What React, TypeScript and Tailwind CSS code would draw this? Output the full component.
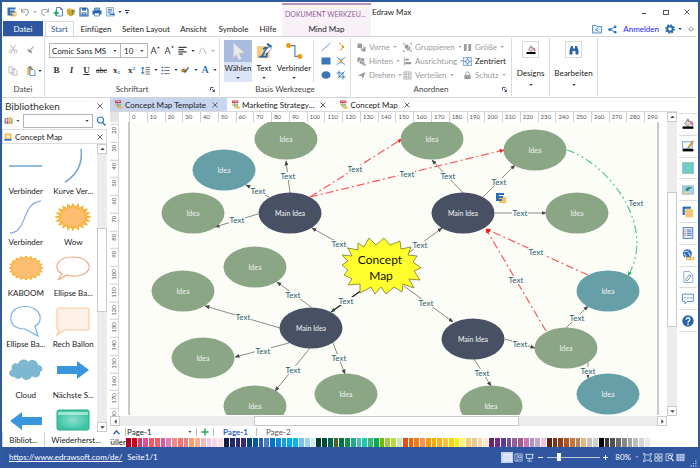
import React from "react";
import clsx from "clsx";

type IconProps = { className?: string; box?: string; children: React.ReactNode };

const Icon: React.FC<IconProps> = ({ className, box = "0 0 20 20", children }) => (
  <svg
    viewBox={box}
    fill="none"
    aria-hidden="true"
    className={clsx("shrink-0", className ?? "size-[10px]")}
  >
    {children}
  </svg>
);

const Caret: React.FC<{ className?: string }> = ({ className }) => (
  <svg
    viewBox="0 0 8 5"
    aria-hidden="true"
    className={clsx("h-[2px] w-[4px] shrink-0 fill-current", className ?? "text-[#1f3864]")}
  >
    <path d="M0 0h8L4 5z" />
  </svg>
);

const CloseIcon = () => (
  <Icon className="size-[6px]" box="0 0 12 12">
    <path d="M1 1l10 10M11 1L1 11" stroke="#555" strokeWidth="1.8" />
  </Icon>
);

const LogoIcon: React.FC<{ className?: string }> = ({ className }) => (
  <Icon className={className}>
    <path d="M7 8h12v11H7z" fill="#f6c15b" />
    <path d="M1 1h16v4H6v2h9v4H6v2h7v4H1z" fill="#2f6fb5" />
    <path d="M10 13h7v2h-7z" fill="#fff" />
  </Icon>
);

const UndoIcon: React.FC<{ flip?: boolean }> = ({ flip }) => (
  <Icon className={clsx("size-[10px]", flip && "-scale-x-100")}>
    <path d="M3 3v7h7M3 9c4-6 13-6 14 1 0 4-3 6-6 8" stroke="#a5a5a5" strokeWidth="2.2" />
  </Icon>
);

const ColorPot = () => (
  <>
    <path d="M4 9l6-6 6 5-6 6z" fill="#d5d5d5" stroke="#777" strokeWidth="1.2" />
    <path d="M8 6V3c0-2 3-2 3 0v4" stroke="#777" strokeWidth="1.2" />
    <path d="M13 5c4-1 6 2 6 7-2 2-4 0-3-3z" fill="#e8528a" />
    <path d="M1 14h18v4H1z" fill="#000" />
  </>
);

const DocIcon = () => (
  <Icon className="size-[9px]">
    <path d="M2 1h14v6H2z" fill="#c8454a" />
    <path d="M4 3h10v1H4z" fill="#fff" />
    <path d="M8 7v9h3M8 11h4" stroke="#4a90c8" strokeWidth="1.6" />
    <path d="M10 9h6v4h-6z" fill="#8fc36b" />
    <path d="M11 14h8v5h-8z" fill="#f2b632" />
    <path d="M3 9h4v4H3z" fill="#f2b632" />
  </Icon>
);

const quickAccess: { label: string; icon: React.ReactNode }[] = [
  {
    label: "Neu",
    icon: (
      <Icon>
        <path d="M7 1h8l4 4v13H7z" fill="#fff" stroke="#2f6fb5" strokeWidth="1.6" />
        <path d="M15 1v4h4" stroke="#2f6fb5" strokeWidth="1.4" />
        <path d="M6 7v11M1 12h11" stroke="#22a565" strokeWidth="3" />
      </Icon>
    ),
  },
  {
    label: "Öffnen",
    icon: (
      <Icon>
        <path d="M2 4l7-2 3 3 7 0-2 10-7 4-7-5z" fill="#f2b440" />
        <path d="M9 9l4-4 5 5h-3c0 4-2 6-5 7 1-3 2-5 1-8z" fill="#3f9a5e" />
        <path d="M2 4l6 4 2 11-7-5z" fill="#e09a26" />
      </Icon>
    ),
  },
  {
    label: "Speichern",
    icon: (
      <Icon>
        <path d="M2 2h13l3 3v13H2z" stroke="#2867ad" strokeWidth="2.4" />
        <path d="M6 2h8v5H6zM5 11h10v7H5z" fill="#2867ad" />
        <path d="M7 13h6M7 16h6" stroke="#fff" strokeWidth="1" />
      </Icon>
    ),
  },
  {
    label: "Drucken",
    icon: (
      <Icon>
        <path d="M5 2h10v5H5z" fill="#8db3dc" stroke="#2867ad" strokeWidth="1.4" />
        <path d="M1 7h18v8H1z" fill="#2867ad" />
        <path d="M5 12h10v6H5z" fill="#fff" stroke="#2867ad" strokeWidth="1.4" />
      </Icon>
    ),
  },
  {
    label: "Senden",
    icon: (
      <Icon>
        <path d="M3 1h14v17H3z" fill="#dce8f5" stroke="#6d9bcc" strokeWidth="1.4" />
        <path d="M6 5h8M6 8h8M6 11h5" stroke="#3d78b8" strokeWidth="1.6" />
        <path d="M9 13h8v-3l3 5-3 4v-3H9z" fill="#3d78b8" />
      </Icon>
    ),
  },
];

const menuTabs = [
  { label: "Start", className: "w-[29px] border border-b-0 border-[#d9d9d9] bg-white text-[#2f56a0]" },
  { label: "Einfügen", className: "w-[44px]" },
  { label: "Seiten Layout", className: "w-[56px]" },
  { label: "Ansicht", className: "w-[39px]" },
  { label: "Symbole", className: "w-[41px]" },
  { label: "Hilfe", className: "w-[28px]" },
];

const Header = () => (
  <header className="flex h-[34px] shrink-0 bg-white">
    <div className="flex w-[280px] flex-col">
      <div className="flex h-[19px] items-center gap-[3px] pl-[5px]">
        <LogoIcon className="size-[10px]" />
        <button aria-label="Rückgängig" className="flex items-center gap-[3px]">
          <UndoIcon />
          <Caret className="text-gray-400" />
        </button>
        <button aria-label="Wiederholen">
          <UndoIcon flip />
        </button>
        {quickAccess.map((item) => (
          <button key={item.label} aria-label={item.label}>
            {item.icon}
          </button>
        ))}
        <Caret />
        <button aria-label="Anpassen" className="flex flex-col items-center gap-px">
          <span className="h-px w-[4px] bg-[#1f3864]" />
          <Caret />
        </button>
      </div>
      <nav className="flex flex-1 items-stretch">
        <button className="mr-[2px] ml-px w-[40px] bg-[#2f56a0] text-white">Datei</button>
        {menuTabs.map((tab) => (
          <button key={tab.label} className={clsx("whitespace-nowrap", tab.className)}>
            {tab.label}
          </button>
        ))}
      </nav>
    </div>
    <div className="mt-px flex w-[89px] flex-col border-t-2 border-[#b98fbd] bg-[#f8f1f8]">
      <div className="flex h-[17px] items-center pl-[3px] text-[7px] whitespace-nowrap text-[#93609b]">
        DOKUMENT WERKZEU...
      </div>
      <button className="flex-1">Mind Map</button>
    </div>
    <div className="flex flex-1 flex-col">
      <div className="flex h-[20px] items-center">
        <span className="flex-1 pl-px">Edraw Max</span>
        <button aria-label="Minimieren" className="w-[22px]">
          <span className="mx-auto mt-[3px] block h-px w-[4px] bg-[#444]" />
        </button>
        <button aria-label="Maximieren" className="w-[21px]">
          <span className="mx-auto block h-[5px] w-[6px] border border-[#555]" />
        </button>
        <button aria-label="Schließen" className="flex w-[22px] justify-center">
          <CloseIcon />
        </button>
      </div>
      <div className="flex flex-1 items-center justify-end gap-[6px] pr-[4px]">
        <button aria-label="Ordner teilen">
          <Icon>
            <path d="M1 3h7l2 2h9v13H1z" fill="#e4effa" stroke="#2f78c0" strokeWidth="1.6" />
            <path d="M13 8l-6 3.500 6 3.500" stroke="#2f78c0" strokeWidth="1.6" />
          </Icon>
        </button>
        <button aria-label="Teilen">
          <Icon className="size-[9px]">
            <path d="M16 4L5 10l11 6" stroke="#2f78c0" strokeWidth="2" />
            <g fill="#2f78c0">
              <circle cx="16" cy="4" r="3" />
              <circle cx="4" cy="10" r="3.500" />
              <circle cx="16" cy="16" r="3" />
            </g>
          </Icon>
        </button>
        <a href="#anmelden" className="text-[#2323f0]">
          Anmelden
        </a>
        <button aria-label="Optionen" className="flex items-center gap-[3px]">
          <Icon>
            <circle cx="10" cy="10" r="5.500" stroke="#2767ad" strokeWidth="4" />
            <circle cx="10" cy="10" r="8.500" stroke="#2767ad" strokeWidth="2.500" strokeDasharray="3.300 3.370" />
          </Icon>
          <Caret />
        </button>
        <button aria-label="Menüband einklappen">
          <Icon className="size-[6px]">
            <path d="M2 10l8-7 8 7-4 1v5H6v-5z" stroke="#666" strokeWidth="2" />
          </Icon>
        </button>
      </div>
    </div>
  </header>
);

const GroupLabel: React.FC<{ children: string; launcher?: boolean }> = ({ children, launcher }) => (
  <div className="flex h-[14px] shrink-0 items-center">
    <span className="flex-1 text-center text-[#444]">{children}</span>
    {launcher && (
      <Icon className="mr-[4px] -ml-[9px] size-[5px]" box="0 0 10 10">
        <path d="M1 7V1h6M4 4l5 5M9 5v4H5" stroke="#1f3864" strokeWidth="1.6" />
      </Icon>
    )}
  </div>
);

const FileGroup = () => (
  <section className="flex w-[43px] flex-col border-r border-[#dcdcdc]">
    <div className="grid flex-1 grid-cols-2 items-center pl-[6px]">
      <button aria-label="Ausschneiden">
        <Icon>
          <path d="M5 2l8 12M15 2L7 14" stroke="#a8a8a8" strokeWidth="1.6" />
          <circle cx="5" cy="15" r="3" stroke="#a8a8a8" strokeWidth="1.6" />
          <circle cx="15" cy="15" r="3" stroke="#a8a8a8" strokeWidth="1.6" />
        </Icon>
      </button>
      <button aria-label="Format übertragen">
        <Icon className="size-[9px]">
          <path d="M19 1l-6 9-3-2zM3 9l9 2 1 8-8-4z" fill="#999" />
        </Icon>
      </button>
      <button aria-label="Kopieren">
        <Icon>
          <path d="M2 2h7l3 3v9H2zM8 6h6l4 4v8H8z" fill="#fff" stroke="#a8a8a8" strokeWidth="1.500" />
        </Icon>
      </button>
      <button aria-label="Einfügen" className="flex items-center gap-[2px]">
        <Icon>
          <path d="M2 3h12v15H2z" fill="#f2bd62" />
          <path d="M5 1h6v4H5z" fill="#6b6b6b" />
          <path d="M8 7h7l3 3v9H8z" fill="#fff" stroke="#2f78c0" strokeWidth="1.500" />
        </Icon>
        <Caret />
      </button>
    </div>
    <GroupLabel>Datei</GroupLabel>
  </section>
);

const FontGroup = () => (
  <section className="flex w-[175px] flex-col border-r border-[#dcdcdc]">
    <div className="flex flex-1 flex-col gap-[6px] pt-[5px] pl-[4px]">
      <div className="flex items-center">
        <div className="flex h-[15px] w-[72px] items-center border border-[#b5b5b5] pr-[3px]">
          <select aria-label="Schriftart" className="w-full appearance-none pl-[2px] outline-none">
            <option>Comic Sans MS</option>
          </select>
          <Caret className="text-[#444]" />
        </div>
        <div className="-ml-px flex h-[15px] w-[28px] items-center border border-[#b5b5b5] pr-[3px]">
          <select aria-label="Schriftgröße" className="w-full appearance-none pl-[3px] outline-none">
            <option>10</option>
          </select>
          <Caret className="text-[#444]" />
        </div>
        <button className="flex w-[14px] items-start justify-center text-[9px] text-[#333]" aria-label="Größer">
          A
          <Icon className="size-[3px]" box="0 0 8 8">
            <path d="M0 6l4-5 4 5z" fill="#333" />
          </Icon>
        </button>
        <button className="flex w-[14px] items-start justify-center text-[9px] text-[#333]" aria-label="Kleiner">
          A
          <Icon className="size-[3px]" box="0 0 8 8">
            <path d="M0 1h8L4 6z" fill="#333" />
          </Icon>
        </button>
        <button aria-label="Ausrichtung" className="flex w-[20px] items-center justify-center gap-[4px]">
          <Icon className="size-[9px]">
            <path d="M1 3h18M1 8h12M1 13h18M1 18h10" stroke="#444" strokeWidth="2.600" />
          </Icon>
          <Caret />
        </button>
        <button aria-label="Bogen" className="flex w-[20px] items-center justify-center gap-[4px]">
          <Icon className="size-[9px]">
            <path d="M1 16h3c1-15 11-15 12 0h3" stroke="#aaa" strokeWidth="1.800" />
          </Icon>
          <Caret className="text-gray-400" />
        </button>
      </div>
      <div className="flex h-[12px] items-center text-[#333]">
        <div className="grid flex-1 grid-cols-6 items-center text-center font-['Liberation_Serif',serif] text-[9px] leading-[9px]">
          <button className="font-bold">B</button>
          <button className="font-bold italic">I</button>
          <button className="font-bold underline">U</button>
          <button className="text-[8px] line-through">abc</button>
          <button className="font-bold">
            x<sub className="text-[5px] text-[#2f78c0]">2</sub>
          </button>
          <button className="font-bold">
            x<sup className="text-[5px] text-[#2f78c0]">2</sup>
          </button>
        </div>
        <button aria-label="Zeilenabstand" className="flex w-[20px] items-center justify-center gap-[4px]">
          <Icon className="size-[9px]">
            <path d="M4 1l4 5H5v8h3l-4 5-4-5h3V6H0z" fill="#2f78c0" />
            <path d="M10 3h10M10 8h10M10 13h10M10 18h10" stroke="#555" strokeWidth="1.800" />
          </Icon>
          <Caret />
        </button>
        <button aria-label="Liste" className="flex w-[20px] items-center justify-center gap-[4px]">
          <Icon className="size-[9px]">
            <path d="M1 3h4M1 10h4M1 17h4" stroke="#2f78c0" strokeWidth="3" />
            <path d="M7 3h12M7 10h12M7 17h12" stroke="#555" strokeWidth="1.800" />
          </Icon>
          <Caret />
        </button>
        <button aria-label="Hervorheben" className="flex w-[20px] items-center justify-center gap-[4px]">
          <Icon className="size-[9px]">
            <path d="M1 6h11v8H1z" fill="#f0a02c" />
            <path d="M3 12c1-6 4-6 4-1s4 1 4-2" stroke="#333" strokeWidth="1.600" />
            <path d="M18 4l-7 10-3 3 1-5 6-10z" fill="#2f6fb5" />
          </Icon>
          <Caret />
        </button>
        <button
          aria-label="Schriftfarbe"
          className="flex w-[20px] items-center justify-center gap-[4px] font-['Liberation_Serif',serif] text-[10px] font-bold text-[#2f78c0]"
        >
          A
          <Caret />
        </button>
      </div>
    </div>
    <GroupLabel launcher>Schriftart</GroupLabel>
  </section>
);

const ToolsGroup = () => (
  <section className="flex w-[131px] flex-col border-r border-[#dcdcdc]">
    <div className="flex flex-1 items-stretch pt-[2px] pl-[4px]">
      <button className="flex w-[28px] flex-col items-center bg-[#dbe5f5]">
        <span className="flex h-[22px] w-full items-center justify-center bg-[#a9bce0]">
          <Icon className="size-[18px]">
            <path d="M5 1l12 11-6 .5 3 6-3 1.500-3-6-3 4z" fill="#e9e9ea" stroke="#c4c4c8" strokeWidth=".5" />
          </Icon>
        </span>
        <span className="h-[12px] leading-[12px]">Wählen</span>
        <Caret className="mt-[3px] text-[#1f3864]" />
      </button>
      <button className="flex w-[24px] flex-col items-center">
        <span className="flex h-[22px] items-center">
          <Icon className="size-[16px]">
            <path d="M1 4h16v15H1z" fill="#f5c987" />
            <path d="M4 17h3l7-11h-3L9 8M5 17h8l2-9" stroke="#2a64a8" strokeWidth="2.200" />
            <path d="M19 3l-6 5-3 6 5-2 5-6z" fill="#fff" stroke="#4a7fb5" strokeWidth=".8" />
            <path d="M15 0l5 4-2 2-5-4z" fill="#2a64a8" />
          </Icon>
        </span>
        <span className="h-[12px] leading-[12px]">Text</span>
        <Caret className="mt-[3px] text-[#1f3864]" />
      </button>
      <button className="flex w-[36px] flex-col items-center">
        <span className="flex h-[22px] items-center">
          <Icon className="size-[18px]">
            <path d="M4 4h7v12h5" stroke="#3b7cc0" strokeWidth="1.200" />
            <circle cx="4" cy="4" r="2.800" fill="#f09c10" />
            <circle cx="16.500" cy="16" r="2.800" fill="#f09c10" />
          </Icon>
        </span>
        <span className="h-[12px] leading-[12px]">Verbinder</span>
        <Caret className="mt-[3px] text-[#1f3864]" />
      </button>
      <div className="ml-px grid flex-1 grid-cols-2 place-items-center border-l border-[#dcdcdc] pr-[2px] pl-[4px]">
        <button aria-label="Linie">
          <Icon>
            <path d="M1 18L19 2" stroke="#3b7cc0" strokeWidth="1.500" />
          </Icon>
        </button>
        <button aria-label="Kurve">
          <Icon>
            <path d="M6 3c10 2 10 12 0 14" stroke="#f09c10" strokeWidth="2.500" strokeDasharray="5 2" />
            <circle cx="14" cy="10" r="2.500" fill="#f09c10" />
          </Icon>
        </button>
        <button aria-label="Rechteck">
          <Icon>
            <path d="M1 3h18v14H1z" fill="#3b76b8" />
          </Icon>
        </button>
        <button aria-label="Punkte">
          <Icon>
            <path d="M1 2c5 6 13 6 18 0M1 18c5-6 13-6 18 0M3 3l14 14M17 3L3 17" stroke="#3b7cc0" strokeWidth="1.200" />
            <circle cx="10" cy="10" r="3" fill="#f09c10" />
          </Icon>
        </button>
        <button aria-label="Ellipse">
          <Icon>
            <ellipse cx="10" cy="10" rx="9" ry="7.500" fill="#3b76b8" />
          </Icon>
        </button>
        <button aria-label="Zuschneiden">
          <Icon>
            <path d="M6 1v13h13M1 6h13v13M5 15L17 3" stroke="#3b7cc0" strokeWidth="1.800" />
          </Icon>
        </button>
      </div>
    </div>
    <GroupLabel>Basis Werkzeuge</GroupLabel>
  </section>
);

type ArrangeItem = { label: string; caret?: boolean; active?: boolean; icon: React.ReactNode };

const arrangeColumns: { className: string; items: ArrangeItem[] }[] = [
  {
    className: "w-[46px]",
    items: [
      {
        label: "Vorne",
        caret: true,
        icon: <path d="M1 1h10v10H1zM12 5h3v7H8v3h3v4h8V9h-4" fill="#9b9b9b" />,
      },
      {
        label: "Hinten",
        caret: true,
        icon: <path d="M1 1h7v6H5v4H1zM6 8h3v3h8v4H6zM9 3h7v7h-7zM12 16h8v3h-8z" fill="#9b9b9b" />,
      },
      { label: "Drehen", caret: true, icon: <path d="M1 10L19 2l-6 16-3-7z" fill="#9b9b9b" /> },
    ],
  },
  {
    className: "w-[60px]",
    items: [
      {
        label: "Gruppieren",
        caret: true,
        icon: (
          <>
            <path d="M1 5V1h4M15 1h4v4M19 15v4h-4M5 19H1v-4" stroke="#999" strokeWidth="1.600" />
            <path d="M4 4h8v8H4zM13 8h3v8H8v-3h5z" fill="#999" />
          </>
        ),
      },
      {
        label: "Ausrichtung",
        caret: true,
        icon: (
          <>
            <path d="M3 1v18" stroke="#999" strokeWidth="1.800" />
            <path d="M5 4h8v4H5zM5 11h13v5H5z" fill="#999" />
          </>
        ),
      },
      {
        label: "Verteilen",
        caret: true,
        icon: <path d="M2 2h16v16H2zM7 2v16M13 2v16M2 7h16M2 13h16" stroke="#999" strokeWidth="1.400" />,
      },
    ],
  },
  {
    className: "w-[44px]",
    items: [
      { label: "Größe", caret: true, icon: <path d="M2 2h6v16H2zM12 2h6v16h-6z" fill="#9b9b9b" /> },
      {
        label: "Zentriert",
        active: true,
        icon: (
          <>
            <path d="M1 1h18v18H1z" fill="#e4effa" stroke="#3b7cc0" strokeWidth="1.300" />
            <circle cx="10" cy="10" r="4" stroke="#3b7cc0" strokeWidth="1.500" />
            <path d="M10 2v4M10 14v4M2 10h4M14 10h4" stroke="#3b7cc0" strokeWidth="1.500" />
          </>
        ),
      },
      {
        label: "Schutz",
        caret: true,
        icon: (
          <>
            <path d="M3 9h14v9H3z" fill="#9b9b9b" />
            <path d="M6 9V5c0-4 8-4 8 0v4" stroke="#9b9b9b" strokeWidth="2" />
          </>
        ),
      },
    ],
  },
];

const ArrangeGroup = () => (
  <section className="flex w-[161px] flex-col border-r border-[#dcdcdc]">
    <div className="flex flex-1 pt-[2px] pl-[6px]">
      {arrangeColumns.map((column) => (
        <div key={column.items[0].label} className={clsx("flex flex-col justify-around", column.className)}>
          {column.items.map((item) => (
            <button
              key={item.label}
              className={clsx(
                "flex items-center gap-[3px] whitespace-nowrap",
                item.active ? "text-[#222]" : "text-[#999]"
              )}
            >
              <Icon className="size-[9px]">{item.icon}</Icon>
              {item.label}
              {item.caret && <Caret className="text-gray-400" />}
            </button>
          ))}
        </div>
      ))}
    </div>
    <GroupLabel launcher>Anordnen</GroupLabel>
  </section>
);

const BoxButton: React.FC<{ label: string; className: string; children: React.ReactNode }> = ({
  label,
  className,
  children,
}) => (
  <button className={clsx("flex flex-col items-center border-r border-[#dcdcdc] pt-[3px]", className)}>
    <span className="flex size-[17px] items-center justify-center border border-[#d9d9d9]">
      <Icon>{children}</Icon>
    </span>
    <span className="mt-[9px] leading-[12px]">{label}</span>
    <Caret className="mt-[5px] text-[#1f3864]" />
  </button>
);

const Ribbon = () => (
  <div className="mr-[2px] flex h-[62px] shrink-0 border-y border-[#d4d4d4] bg-white py-px">
    <FileGroup />
    <FontGroup />
    <ToolsGroup />
    <ArrangeGroup />
    <BoxButton label="Designs" className="w-[38px]">
      <ColorPot />
    </BoxButton>
    <BoxButton label="Bearbeiten" className="w-[48px]">
      <path d="M4 2h4v5h4V2h4l3 9v8h-6v-7H7v7H1v-8z" fill="#2a64a8" />
    </BoxButton>
  </div>
);

const burst = (points: number, rx: number, ry: number, inner: number) =>
  Array.from({ length: points * 2 }, (_, i) => {
    const a = (Math.PI * i) / points;
    const k = i % 2 ? inner : 1;
    return `${(20 + Math.cos(a) * rx * k).toFixed(1)},${(20 + Math.sin(a) * ry * k).toFixed(1)}`;
  }).join(" ");

const shapes: { label?: string; drawing: React.ReactNode }[] = [
  { label: "Verbinder", drawing: <path d="M3 20h33" stroke="#6ea5cc" strokeWidth="1.500" /> },
  { label: "Kurve Ver...", drawing: <path d="M28 3c2 14-4 26-16 33" stroke="#6ea5cc" strokeWidth="1.500" /> },
  { label: "Verbinder", drawing: <path d="M4 36c18-1 11-30 31-32" stroke="#8caee0" strokeWidth="1.300" /> },
  {
    label: "Wow",
    drawing: <polygon points={burst(20, 17, 13, 0.72)} fill="#fdbd72" stroke="#f8ae25" strokeWidth="1.200" />,
  },
  {
    label: "KABOOM",
    drawing: <polygon points={burst(20, 17, 12, 0.82)} fill="#fdbd72" stroke="#f8ae25" strokeWidth="1" />,
  },
  {
    label: "Ellipse Ba...",
    drawing: (
      <path
        d="M9 26C-1 20 4 9 20 9s21 12 11 17c-4 2-12 3-17 1l-9 5z"
        fill="#fff"
        stroke="#f3a57c"
        strokeWidth="1.200"
      />
    ),
  },
  {
    label: "Ellipse Ba...",
    drawing: (
      <path
        d="M19 30C8 30 4 24 5 17 7 4 31 4 34 17c1 5-1 8-5 10l3 10z"
        fill="#fff"
        stroke="#74b3e4"
        strokeWidth="1.200"
      />
    ),
  },
  {
    label: "Rech Ballon",
    drawing: (
      <path
        d="M6 9h28q2 0 2 2v18q0 2-2 2H12l-8 5 2-5q-2 0-2-2V11q0-2 2-2z"
        fill="#fef2e8"
        stroke="#f8cba0"
        strokeWidth="1.200"
      />
    ),
  },
  {
    label: "Cloud",
    drawing: (
      <path
        d="M9 27c-6 1-8-6-3-7-2-5 3-8 6-6 1-5 8-6 10-2 4-4 10-1 10 3 5 0 6 6 2 7 1 5-5 7-8 4-2 5-9 5-10 1-3 3-7 2-7 0z"
        fill="#7db7d0"
      />
    ),
  },
  { label: "Nächste S...", drawing: <path d="M4 16h20v-5l12 9-12 9v-5H4z" fill="#3a96dc" /> },
  { drawing: <path d="M36 16H16v-5L4 20l12 9v-5h20z" fill="#3a96dc" /> },
  {
    drawing: (
      <>
        <defs>
          <radialGradient id="glass">
            <stop offset="0" stopColor="#8de0cb" />
            <stop offset="1" stopColor="#3cc4a4" />
          </radialGradient>
        </defs>
        <rect x="4" y="9" width="32" height="20" rx="2" fill="url(#glass)" stroke="#2aa98c" />
        <path d="M5 11h30v3H5z" fill="#c5f2e6" opacity=".7" />
      </>
    ),
  },
];

const ScrollButton: React.FC<{ direction: "up" | "down" | "left" | "right" }> = ({ direction }) => {
  const paths = {
    up: "M2 7l4-4 4 4z",
    down: "M2 4h8L6 8z",
    left: "M8 2v8L4 6z",
    right: "M4 2v8l4-4z",
  };
  return (
    <button
      aria-label={`scroll ${direction}`}
      className="flex size-[10px] shrink-0 items-center justify-center border border-[#c9c9c9] bg-white"
    >
      <Icon className="size-[7px]" box="0 0 12 12">
        <path d={paths[direction]} fill="#444" />
      </Icon>
    </button>
  );
};

const LibraryPanel = () => (
  <aside className="flex w-[105px] shrink-0 flex-col bg-white">
    <div className="flex h-[15px] items-center justify-between pr-[4px] pl-[3px]">
      <h2 className="text-[10px] text-[#333]">Bibliotheken</h2>
      <button aria-label="Bibliotheken schließen">
        <CloseIcon />
      </button>
    </div>
    <div className="flex h-[15px] items-center gap-[3px] pl-[2px]">
      <Icon className="size-[9px]">
        <path d="M1 6l4-2v14l-4-2z" fill="#4a90c8" />
        <path d="M6 4h4v14H6z" fill="#d9534f" />
        <path d="M11 3h4v15h-4z" fill="#f0a02c" />
        <path d="M16 5h3v12h-3z" fill="#5aa865" />
        <path d="M1 9h18" stroke="#fff" strokeWidth="1.500" />
      </Icon>
      <Caret className="text-[#555]" />
      <div className="flex h-[14px] w-[70px] items-center border border-[#b5b5b5] pr-[3px]">
        <input aria-label="Bibliothek suchen" className="w-full outline-none" />
        <Caret className="text-[#444]" />
      </div>
      <button aria-label="Suchen">
        <Icon>
          <circle cx="9" cy="8" r="6" stroke="#2f78c0" strokeWidth="2.200" />
          <path d="M13 13l6 6" stroke="#2f78c0" strokeWidth="2.800" />
        </Icon>
      </button>
    </div>
    <div className="mt-px flex h-[15px] items-center gap-[3px] border border-[#dcdcdc] pr-[3px] pl-px">
      <Icon className="size-[8px]">
        <path d="M1 1h18v14H1z" fill="#f3bd5d" />
        <path d="M10 3l2 4h4l-3 3 1 4-4-2-4 2 1-4-3-3h4z" fill="#fff" />
        <path d="M1 15h18v4H1z" fill="#2f6fb5" />
      </Icon>
      <span className="flex-1">Concept Map</span>
      <button aria-label="Concept Map schließen">
        <CloseIcon />
      </button>
    </div>
    <div className="flex min-h-0 flex-1">
      <div className="grid flex-1 auto-rows-[51px] grid-cols-2 overflow-hidden pt-[2px]">
        {shapes.map((shape, i) => (
          <div key={i} className="flex flex-col items-center whitespace-nowrap">
            <Icon className="size-[40px]" box="0 0 40 40">
              {shape.drawing}
            </Icon>
            {shape.label && <span className="leading-[11px]">{shape.label}</span>}
          </div>
        ))}
      </div>
      <div className="flex w-[10px] flex-col bg-[#ececec]">
        <ScrollButton direction="up" />
        <div className="mt-[74px] h-[84px] border border-[#c9c9c9] bg-white" />
        <div className="flex-1" />
        <ScrollButton direction="down" />
      </div>
    </div>
    <div className="flex h-[15px] shrink-0 text-center">
      <button className="w-[43px] border-x border-[#d0d0d0]">Bibliot...</button>
      <button className="flex-1">Wiederherst...</button>
    </div>
  </aside>
);

const docTabs = [
  { label: "Concept Map Template", active: true },
  { label: "Marketing Strategy..." },
  { label: "Concept Map" },
];

const GREEN = "#8aa685";
const TEAL = "#669fa7";
const NAVY = "#485164";

type MapNode = { x: number; y: number; fill: string };

const nodes: MapNode[] = [
  { x: 167, y: 17, fill: GREEN },
  { x: 105, y: 48, fill: TEAL },
  { x: 74, y: 91, fill: GREEN },
  { x: 171, y: 91, fill: NAVY },
  { x: 313, y: 17, fill: GREEN },
  { x: 416, y: 28, fill: GREEN },
  { x: 344, y: 91, fill: NAVY },
  { x: 458, y: 91, fill: GREEN },
  { x: 136, y: 145, fill: GREEN },
  { x: 192, y: 206, fill: NAVY },
  { x: 64, y: 169, fill: GREEN },
  { x: 84, y: 236, fill: GREEN },
  { x: 136, y: 284, fill: GREEN },
  { x: 227, y: 272, fill: GREEN },
  { x: 354, y: 217, fill: NAVY },
  { x: 372, y: 284, fill: GREEN },
  { x: 447, y: 226, fill: GREEN },
  { x: 489, y: 169, fill: TEAL },
  { x: 489, y: 272, fill: TEAL },
];

// x1, y1, x2, y2, label x, label y
const links = [
  [171, 71, 167, 39, 169, 54],
  [150, 75, 127, 63, 139, 69],
  [139, 92, 96, 105, 118, 98],
  [232, 128, 193, 106, 220, 122],
  [344, 71, 313, 38, 329, 54],
  [364, 75, 396, 43, 380, 60],
  [376, 91, 427, 91, 401, 91],
  [288, 132, 323, 106, 301, 123],
  [285, 164, 334, 200, 307, 181],
  [192, 185, 158, 160, 174, 173],
  [161, 206, 86, 184, 124, 195],
  [170, 221, 116, 235, 144, 229],
  [191, 226, 156, 269, 174, 248],
  [214, 221, 226, 252, 220, 236],
  [355, 237, 372, 264, 363, 251],
  [386, 217, 416, 226, 401, 222],
  [447, 206, 469, 184, 458, 196],
  [469, 241, 469, 256, 469, 249],
];

const redLinks = [
  [191, 75, 283, 17, 236, 47],
  [191, 75, 385, 28, 288, 52],
  [469, 153, 367, 107, 417, 130],
  [427, 209, 367, 107, 397, 158],
];

const starPoints =
  "239,121 245,125 250,116 257,123 265,116 271,123 281,119 282,127 292,125 289,133 298,134 294,140 302,146 295,149 301,158 290,157 295,166 284,162 283,170 275,165 267,172 262,165 256,172 252,165 241,171 241,162 229,163 233,157 225,153 229,148 223,143 229,139 223,133 233,134 229,126 239,128";

const LinkLabel: React.FC<{ x: number; y: number }> = ({ x, y }) => (
  <>
    <rect x={x - 8} y={y - 4} width="16" height="8" fill="#fdfdf8" />
    <text x={x} y={y + 3} textAnchor="middle" fill="#2b6070" fontSize="8">
      Text
    </text>
  </>
);

const Diagram = () => (
  <svg viewBox="0 0 548 293" className="h-[293px] w-[548px] shrink-0" role="img" aria-label="Concept Map">
    <defs>
      {[
        ["arrow", "#444"],
        ["arrow-red", "#fa1e1e"],
        ["arrow-green", "#27b36a"],
      ].map(([id, color]) => (
        <marker
          key={id}
          id={id}
          viewBox="0 0 10 10"
          refX="9"
          refY="5"
          markerWidth="5"
          markerHeight="5"
          markerUnits="userSpaceOnUse"
          orient="auto-start-reverse"
        >
          <path d="M0 1l10 4-10 4z" fill={color} />
        </marker>
      ))}
    </defs>
    <rect width="548" height="293" fill="#fff" />
    <rect x="10" y="-4" width="529" height="310" fill="#fdfdf8" stroke="#c9c9c9" strokeWidth="2" />
    {links.map(([x1, y1, x2, y2], i) => (
      <line key={i} x1={x1} y1={y1} x2={x2} y2={y2} stroke="#6b6b6b" strokeWidth=".8" markerEnd="url(#arrow)" />
    ))}
    <line x1="243" y1="168" x2="212" y2="190" stroke="#111" strokeWidth="1.200" markerEnd="url(#arrow)" />
    {redLinks.map(([x1, y1, x2, y2], i) => (
      <line
        key={i}
        x1={x1}
        y1={y1}
        x2={x2}
        y2={y2}
        stroke="#fb5a5a"
        strokeWidth="1.200"
        strokeDasharray="8 3 2 3"
        markerEnd="url(#arrow-red)"
      />
    ))}
    <path
      d="M448 28C490 42 538 104 509 154"
      fill="none"
      stroke="#52c78b"
      strokeWidth="1.200"
      strokeDasharray="8 3 2 3 2 3"
      markerEnd="url(#arrow-green)"
    />
    {[...links, ...redLinks].map(([, , , , x, y], i) => (
      <LinkLabel key={i} x={x} y={y} />
    ))}
    <LinkLabel x={227} y={179} />
    <LinkLabel x={517} y={81} />
    {nodes.map((node) => (
      <g key={`${node.x}-${node.y}`}>
        <ellipse cx={node.x} cy={node.y} rx="31.500" ry="20.500" fill={node.fill} />
        <text x={node.x} y={node.y + 3} textAnchor="middle" fill="#f2f4f2" fontSize="7">
          {node.fill === NAVY ? "Main Idea" : "Idea"}
        </text>
      </g>
    ))}
    <polygon points={starPoints} fill="#ffff2e" stroke="#77772a" strokeWidth=".8" />
    <g textAnchor="middle" fontSize="12" fill="#111">
      <text x="261" y="142">
        Concept
      </text>
      <text x="262" y="158">
        Map
      </text>
    </g>
    <g transform="translate(377 71)">
      <path d="M3 4h7v6H3z" fill="#f6c15b" />
      <path d="M0 0h8v2H3v1h4v2H3v1h3v2H0z" fill="#2f6fb5" />
    </g>
  </svg>
);

const range = (from: number, count: number) => Array.from({ length: count }, (_, i) => from + i * 10);

const Canvas = () => (
  <div className="flex min-h-0 flex-1">
    <div className="flex min-w-0 flex-1 flex-col">
      <div className="flex h-[10px] shrink-0 text-[6px] leading-[9px] text-[#555]">
        <div className="w-[9px] shrink-0 bg-[#e4e4e4]" />
        <div className="w-[10px] shrink-0" />
        <div className="flex min-w-0 flex-1 overflow-hidden">
          <div className="flex w-[533px] shrink-0">
            {range(0, 30).map((n) => (
              <span key={n} className="flex-1 basis-0 border-l border-[#d0d0d0] pl-[2px]">
                {n}
              </span>
            ))}
          </div>
        </div>
      </div>
      <div className="flex min-h-0 flex-1">
        <div className="w-[9px] shrink-0 overflow-hidden border-r border-[#d8d8d8] text-[6px] leading-[8px] text-[#555]">
          <div className="flex h-[304px] flex-col pt-[2px]">
            {range(20, 17).map((n) => (
              <span
                key={n}
                className="flex-1 basis-0 rotate-180 border-b border-[#d0d0d0] pb-[2px] text-end [writing-mode:vertical-rl]"
              >
                {n}
              </span>
            ))}
          </div>
        </div>
        <div className="min-w-0 flex-1 overflow-hidden">
          <Diagram />
        </div>
      </div>
      <div className="flex h-[10px] shrink-0 bg-[#ececec]">
        <ScrollButton direction="left" />
        <div className="ml-[134px] w-[265px] border border-[#c9c9c9] bg-white" />
        <div className="flex-1" />
        <ScrollButton direction="right" />
      </div>
    </div>
    <div className="mb-[10px] flex w-[10px] shrink-0 flex-col bg-[#ececec]">
      <ScrollButton direction="up" />
      <div className="mt-[70px] h-[135px] border border-[#c9c9c9] bg-white" />
      <div className="flex-1" />
      <ScrollButton direction="down" />
    </div>
  </div>
);

const palette = [
  "#b00020", "#d4001a", "#c0447a", "#e0508c", "#ef5a64", "#f0606c", "#e05a9c", "#d880b4", "#f08a8a", "#f4746c",
  "#ee7d8c", "#ff9c6c", "#fcae86", "#f6b8c8", "#eccfe6", "#f8d6e6", "#fbdfe8", "#101c44", "#1c2c60", "#2c2c6c",
  "#3c2878", "#00447c", "#0058a0", "#2c60a8", "#4c7cc0", "#0074c8", "#1488d4", "#14a0e0", "#00a8f0", "#00bcf4",
  "#7cc0ec", "#9cd4f0", "#ccecf8", "#00402c", "#004838", "#006458", "#4c6420", "#007444", "#149040", "#20a890",
  "#4cbcb0", "#14ccb0", "#3cb878", "#00b04c", "#74b800", "#9ccc44", "#bcd838", "#c8e4c0", "#e84c1c", "#f06400",
  "#f47c14", "#f49450", "#f49c00", "#fcac00", "#fcb424", "#fcc43c", "#fcd400", "#fff000", "#fcf47c", "#f8cc74",
  "#e8c88c", "#fcd8a4", "#fce8cc", "#6c2468", "#742c80", "#583c94", "#7c4c94", "#94609c", "#a05c8c", "#cc74b0",
  "#ac90d0", "#c8a4cc", "#f0c4dc", "#5c2410", "#743824", "#943c1c", "#ac5424", "#c47838", "#b48464", "#e0b880",
  "#c8c4bc", "#c8d4cc", "#000000", "#383838", "#505050", "#6c6c6c", "#888888", "#a4a4a4", "#bcbcbc", "#d4d4d4",
  "#e8e8e8",
];

const PageBar = () => (
  <div className="shrink-0 bg-white">
    <div className="flex h-[12px] items-center whitespace-nowrap">
      <button aria-label="Seiten" className="mr-[5px] ml-[3px]">
        <Icon className="size-[7px]" box="0 0 12 12">
          <path d="M1 9l5-6 5 6" stroke="#2f5fa8" strokeWidth="2.200" />
        </Icon>
      </button>
      <div className="flex w-[72px] items-center border-x border-[#bbb] pr-[4px] leading-[8px]">
        <select aria-label="Seite" className="w-full appearance-none pl-px outline-none">
          <option>Page-1</option>
        </select>
        <Caret className="text-[#555]" />
      </div>
      <button aria-label="Seite hinzufügen" className="mx-[4px]">
        <Icon className="size-[8px]">
          <path d="M10 1v18M1 10h18" stroke="#22a54b" strokeWidth="3.500" />
        </Icon>
      </button>
      <button className="border-l border-[#bbb] pl-[9px] leading-[8px] font-bold text-[#2f5fc8]">Page-1</button>
      <button className="ml-[8px] border-l border-[#bbb] pl-[9px] leading-[8px] text-[#555]">Page-2</button>
    </div>
    <div className="flex h-[9px] items-stretch">
      <div className="flex w-[16px] shrink-0 justify-end overflow-hidden leading-[9px]">Füller</div>
      <div className="flex w-[523px] gap-px">
        {palette.map((color, i) => (
          <span key={i} className="flex-1" style={{ backgroundColor: color }} />
        ))}
      </div>
    </div>
  </div>
);

const sideTools: { label: string; icon: React.ReactNode }[] = [
  { label: "Füllung", icon: <ColorPot /> },
  {
    label: "Linie",
    icon: (
      <>
        <path d="M1 3h16v11H1z" fill="#fff" stroke="#3b7cc0" strokeWidth="1.200" />
        <path d="M18 1l-7 9-2 4 4-2 6-9z" fill="#f0a02c" stroke="#8a5a1a" strokeWidth=".6" />
        <path d="M1 15h18v4H1z" fill="#000" />
      </>
    ),
  },
  { label: "Schatten", icon: <path d="M1 1h18v18H1z" fill="#74ccc4" stroke="#5bb5ad" /> },
  {
    label: "Bild",
    icon: (
      <>
        <path d="M1 3h18v14H1z" fill="#a9d4ea" stroke="#6d9bb8" />
        <path d="M2 16c2-4 6-4 8-2s6 0 8 2z" fill="#f0d48a" />
        <path d="M5 10c2-5 9-7 12-3-3 0-5 1-7 5z" fill="#2f8a6a" />
      </>
    ),
  },
  {
    label: "Ebenen",
    icon: (
      <>
        <path d="M1 1h14v14H1z" fill="#2f6fb5" />
        <path d="M5 5h14v14H5z" fill="#f3c577" stroke="#fff" strokeWidth=".8" />
      </>
    ),
  },
  {
    label: "Daten",
    icon: (
      <>
        <path d="M2 1h16v18H2z" fill="#eaf2fb" stroke="#3b6fb0" strokeWidth="1.500" />
        <path d="M8 5h8M8 8h8M8 11h8M8 14h8" stroke="#3b6fb0" strokeWidth="1.500" />
        <path d="M5 4v12" stroke="#d65a5a" strokeWidth="1.800" strokeDasharray="2 1" />
      </>
    ),
  },
  {
    label: "Hyperlink",
    icon: (
      <>
        <circle cx="9" cy="8" r="7.500" fill="#2f6fb5" />
        <path d="M4 5c3-3 4 1 7-2M3 9c3-1 4 3 3 6M10 7c3-1 4 2 3 5" stroke="#fff" strokeWidth="1.600" />
        <path d="M8 14h5v4H8zM14 14h5v4h-5z" fill="#fff" stroke="#e8a93a" strokeWidth="1.600" />
      </>
    ),
  },
  {
    label: "Anhang",
    icon: (
      <>
        <path d="M3 1h10l5 5v13H3z" fill="#fff" stroke="#6d9bcc" strokeWidth="1.300" />
        <path d="M7 13l5-6c2-1 4 1 2 3l-5 6c-2 1-4-1-2-3z" stroke="#6c7f96" strokeWidth="1.500" />
      </>
    ),
  },
  {
    label: "Kommentar",
    icon: (
      <>
        <path d="M1 2h18v12H9l-4 4v-4H1z" fill="#fff" stroke="#3b7cc0" strokeWidth="1.400" />
        <path d="M4 8h2M9 8h2M14 8h2" stroke="#3b7cc0" strokeWidth="2.400" />
      </>
    ),
  },
  {
    label: "Hilfe",
    icon: (
      <>
        <circle cx="10" cy="10" r="9.500" fill="#2a64a8" />
        <path d="M7 8c0-5 7-4 6 0 0 2-3 2-3 5" stroke="#fff" strokeWidth="2.200" />
        <circle cx="10" cy="15.500" r="1.400" fill="#fff" />
      </>
    ),
  },
];

const SideBar = () => (
  <aside className="w-[21px] shrink-0 pt-[15px] pr-px pl-[2px]">
    <div className="flex h-[219px] flex-col divide-y divide-[#dcdcdc] border-y border-[#dcdcdc]">
      {sideTools.map((tool) => (
        <button key={tool.label} aria-label={tool.label} className="flex flex-1 items-center justify-center">
          <Icon className="size-[12px]">{tool.icon}</Icon>
        </button>
      ))}
    </div>
  </aside>
);

const Workspace = () => (
  <main className="ml-[3px] flex min-w-0 flex-1">
    <div className="flex min-w-0 flex-1 flex-col">
      <div className="flex h-[14px] shrink-0 border-b border-[#d8d8d8]">
        {docTabs.map((tab) => (
          <button
            key={tab.label}
            className={clsx(
              "flex items-center gap-[2px] whitespace-nowrap",
              tab.active ? "w-[117px] bg-[#c8d5ef] pl-[4px]" : "pr-[9px] pl-[4px]"
            )}
          >
            <DocIcon />
            {tab.label}
            <span className="pl-[4px]">
              <CloseIcon />
            </span>
          </button>
        ))}
      </div>
      <Canvas />
      <PageBar />
    </div>
    <SideBar />
  </main>
);

const StatusBar = () => (
  <footer className="flex h-[20px] shrink-0 items-center bg-[#3056a0] pl-[7px] text-white">
    <a href="https://www.edrawsoft.com/de/" className="underline">
      https://www.edrawsoft.com/de/
    </a>
    <span className="flex-1 pl-[5px]">Seite1/1</span>
    <button aria-label="Normal" className="flex h-[11px] w-[12px] items-center justify-center bg-[#c3d3ee]">
      <Icon className="size-[9px]">
        <path d="M2 3h16v14H2z" stroke="#fff" strokeWidth="1.800" />
        <path d="M5 7h10M5 12h10" stroke="#fff" strokeWidth="1.600" />
      </Icon>
    </button>
    <button aria-label="Gliederung" className="w-[11px] pl-px">
      <Icon className="size-[9px]">
        <path d="M2 2h16v16H2zM7 2v16M10 6h6v4h-6zM10 14h6" stroke="#dbe5f5" strokeWidth="1.600" />
      </Icon>
    </button>
    <button aria-label="Präsentation" className="w-[10px] pl-px">
      <Icon className="size-[9px]">
        <path d="M1 3h18M3 3v9h14V3M10 12v4M5 18h10" stroke="#dbe5f5" strokeWidth="2" />
      </Icon>
    </button>
    <button aria-label="Verkleinern" className="w-[13px] pl-[4px]">
      <span className="block h-px w-[5px] bg-white" />
    </button>
    <input
      type="range"
      aria-label="Zoom"
      min={0}
      max={100}
      defaultValue={20}
      className="h-[8px] w-[53px] appearance-none bg-transparent [&::-webkit-slider-runnable-track]:h-px [&::-webkit-slider-runnable-track]:bg-[#c3c9d6] [&::-webkit-slider-thumb]:-mt-[4px] [&::-webkit-slider-thumb]:h-[8px] [&::-webkit-slider-thumb]:w-[4px] [&::-webkit-slider-thumb]:appearance-none [&::-webkit-slider-thumb]:bg-white"
    />
    <button aria-label="Vergrößern" className="w-[15px] pl-[3px]">
      <Icon className="size-[5px]" box="0 0 10 10">
        <path d="M5 0v10M0 5h10" stroke="#fff" strokeWidth="2" />
      </Icon>
    </button>
    <span>80%</span>
    <Caret className="mx-[4px] text-[#8099c8]" />
    <div className="flex gap-[2px]">
      <Icon className="size-[9px]">
        <path d="M1 5V1h4M15 1h4v4M19 15v4h-4M5 19H1v-4M4 4h12v12H4z" stroke="#dbe5f5" strokeWidth="1.800" />
      </Icon>
      <Icon className="size-[9px]">
        <path d="M2 2h7v7H2zM11 2h7v7h-7zM2 11h7v7H2zM11 11h7v7h-7z" stroke="#dbe5f5" strokeWidth="1.800" />
      </Icon>
      <Icon className="size-[9px]">
        <path d="M9 17H2V2h15v6" stroke="#dbe5f5" strokeWidth="1.800" />
        <circle cx="11" cy="9" r="4" stroke="#fff" strokeWidth="2" />
        <path d="M14 12l5 6" stroke="#fff" strokeWidth="2.500" />
      </Icon>
      <Icon className="size-[9px]">
        <path d="M1 2h18v16H1z" fill="#c3d3ee" />
        <path d="M7 2v16M13 2v16M1 7h18M1 13h18" stroke="#3056a0" strokeWidth="1" />
      </Icon>
    </div>
    <Icon className="mr-px ml-[5px] size-[7px] self-end" box="0 0 12 12">
      <path
        d="M9 1h2v2H9zM9 5h2v2H9zM9 9h2v2H9zM5 5h2v2H5zM5 9h2v2H5zM1 9h2v2H1z"
        fill="#c3d3ee"
      />
    </Icon>
  </footer>
);

const App: React.FC = () => (
  <div className="flex h-screen flex-col overflow-hidden border-2 border-b-1 border-[#2f5a9f] bg-white font-['Lato',sans-serif] text-[8px] leading-[10px] text-[#222]">
    <Header />
    <Ribbon />
    <div className="flex min-h-0 flex-1">
      <LibraryPanel />
      <Workspace />
    </div>
    <StatusBar />
  </div>
);

export default App;
